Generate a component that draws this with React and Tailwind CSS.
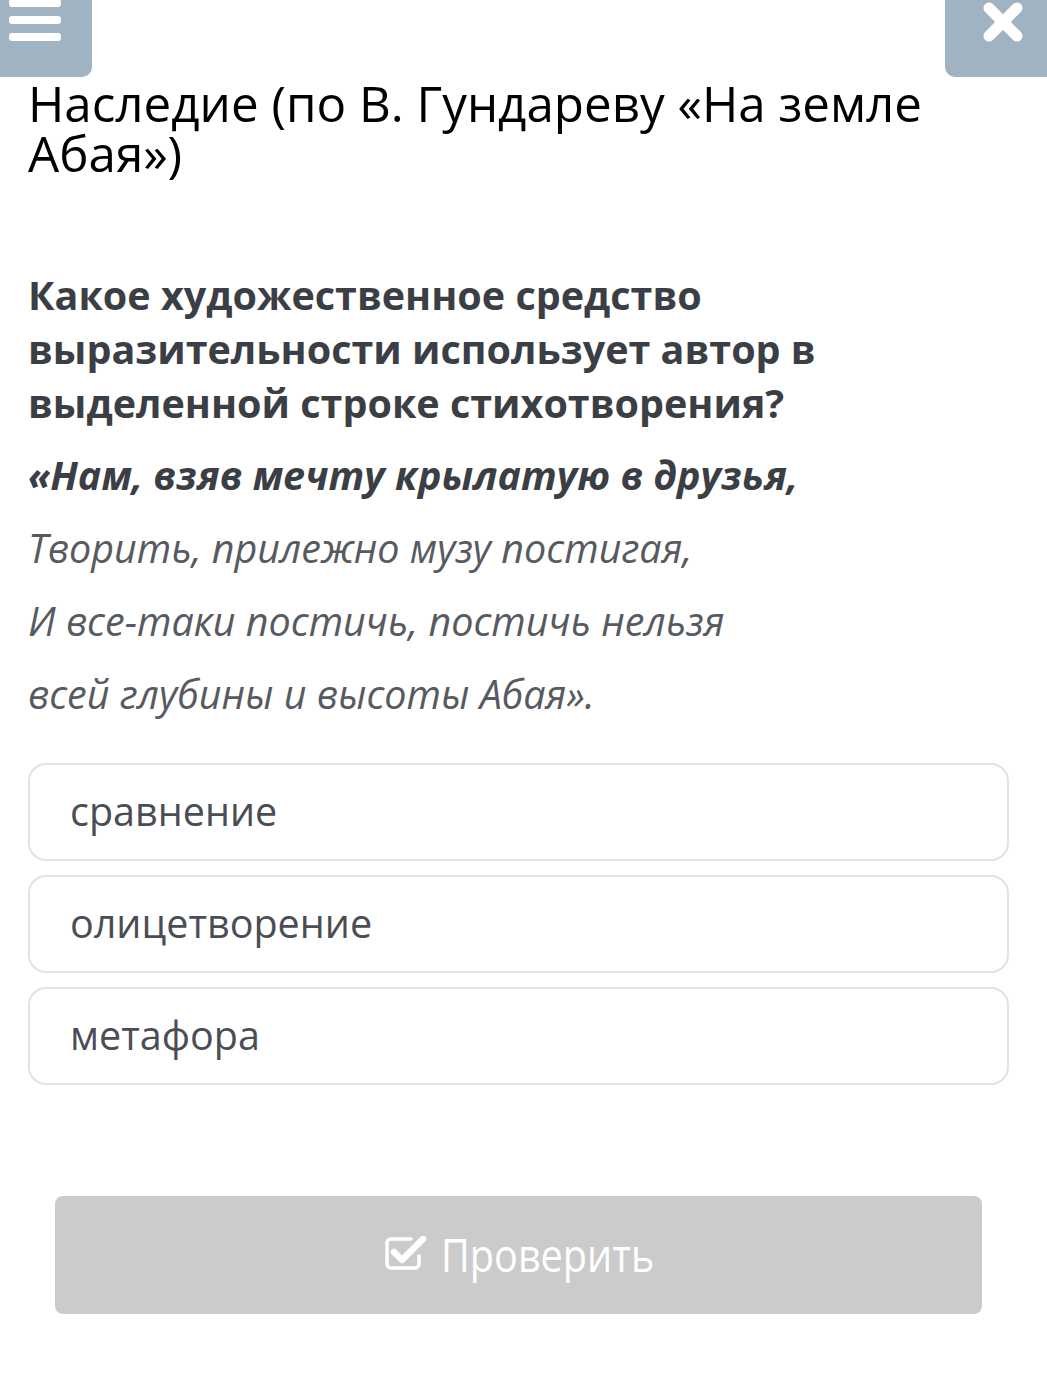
const CheckIcon = ({ className }) => (
  <svg viewBox="0 0 42 34" className={className} fill="none">
    <path d="M34 20v8a4 4 0 0 1-4 4H6a4 4 0 0 1-4-4V7a4 4 0 0 1 4-4h20" stroke="white" strokeWidth="3.5" strokeLinecap="round" />
    <path d="M9 16l8 8L38 3" stroke="white" strokeWidth="6.5" strokeLinecap="round" strokeLinejoin="round" />
  </svg>
);

const options = ["сравнение", "олицетворение", "метафора"];

export default function App() {
  return (
    <div className="min-h-[1385px] bg-white font-['Open_Sans',sans-serif] overflow-hidden">
      <div className="flex justify-between h-[77px]">
        <button className="w-[92px] h-[90px] -mt-[13px] bg-[#9fb3c3] rounded-br-[10px] flex flex-col gap-[9px] pl-[9px] pt-[12px]">
          <span className="block w-[52px] h-[8px] bg-white rounded-[3px]" />
          <span className="block w-[52px] h-[8px] bg-white rounded-[3px]" />
          <span className="block w-[52px] h-[8px] bg-white rounded-[3px]" />
        </button>
        <button className="w-[102px] h-[90px] -mt-[13px] bg-[#9fb3c3] rounded-bl-[10px] flex items-start pl-[37px] pt-[14px]">
          <svg viewBox="0 0 42 42" className="w-[42px] h-[42px]">
            <path d="M7 7l28 28M35 7L7 35" stroke="white" strokeWidth="11" strokeLinecap="round" />
          </svg>
        </button>
      </div>

      <div className="px-[28px]">
        <h1 className="mt-[1px] text-[49.3px] leading-[50px] text-black font-normal">
          Наследие (по В. Гундареву «На земле Абая»)
        </h1>

        <p className="mt-[90px] text-[39.5px] leading-[54px] font-bold text-[#3b3f45]">
          Какое художественное средство выразительности использует автор в выделенной строке стихотворения?
        </p>

        <div className="mt-[9px] text-[39.5px] leading-[73px] italic text-[#575b61]">
          <p className="font-bold text-[#3b3f45]">«Нам, взяв мечту крылатую в друзья,</p>
          <p>Творить, прилежно музу постигая,</p>
          <p>И все-таки постичь, постичь нельзя</p>
          <p>всей глубины и высоты Абая».</p>
        </div>

        <div className="mt-[32px] mr-[10px] flex flex-col gap-[14px]">
          {options.map((o) => (
            <div key={o} className="h-[98px] border-2 border-[#e2e2e2] rounded-[18px] flex items-center pl-[40px] text-[39.5px] text-[#4a4e54]">
              {o}
            </div>
          ))}
        </div>

        <div className="pl-[27px] pr-[37px] mt-[111px]">
          <button className="w-full h-[118px] bg-[#cbcbcb] rounded-[8px] flex items-center justify-center text-white text-[45px]">
            <CheckIcon className="w-[42px] h-[34px] mr-[14px] mt-[-4px]" />
            <span className="inline-block w-[212px] scale-x-[0.88] origin-left whitespace-nowrap">Проверить</span>
          </button>
        </div>
      </div>
    </div>
  );
}
